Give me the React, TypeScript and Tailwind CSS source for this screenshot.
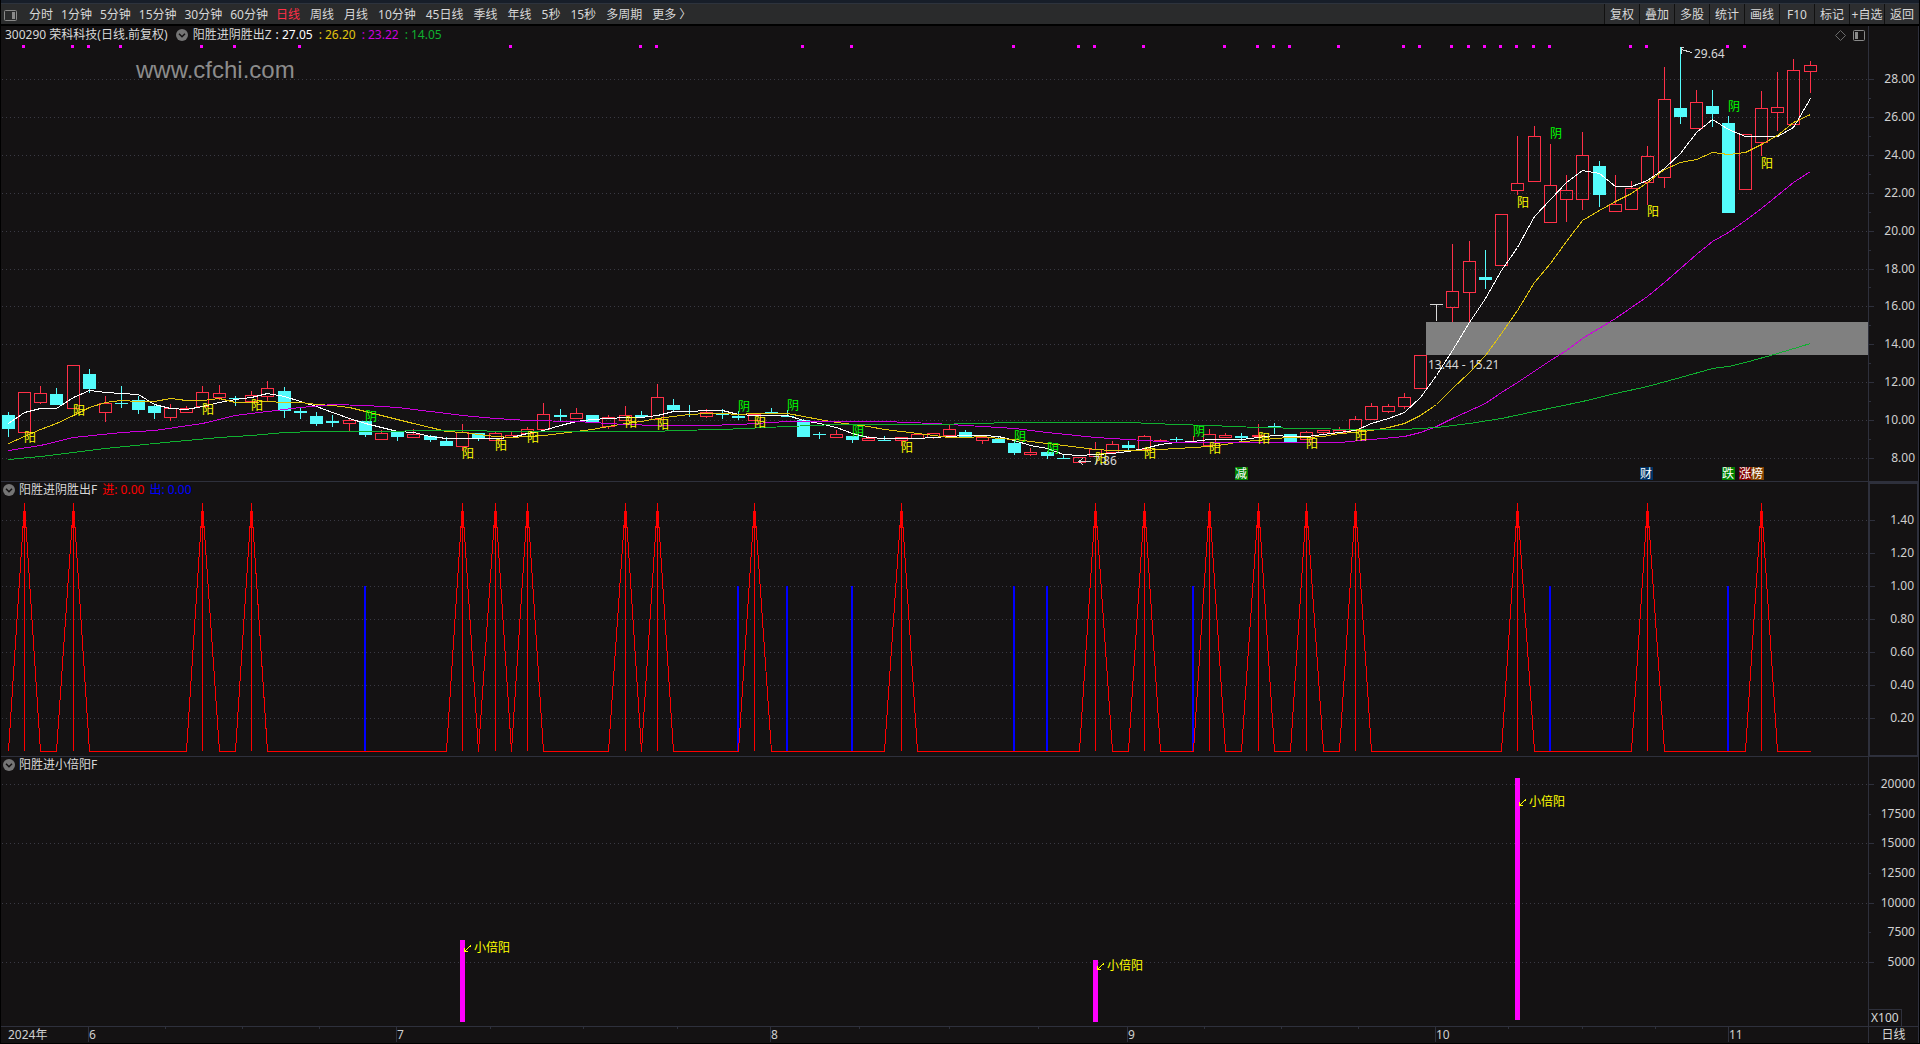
import React, { useLayoutEffect, useRef, useState } from 'react';
import { clsx } from 'clsx';

type Kind = 'u' | 'd' | 'f';
type Candle = [Kind, number, number, number, number];
type Point = [number, number];

const MINUTES = ['分时', '1分钟', '5分钟', '15分钟', '30分钟', '60分钟'];
const PERIODS = ['日线', '周线', '月线', '10分钟', '45日线', '季线', '年线', '5秒', '15秒', '多周期', '更多 〉'];
const ACTIONS = ['复权', '叠加', '多股', '统计', '画线', 'F10', '标记', '+自选', '返回'];

// plot widths and heights that the levels below are given in
const PLOT_W = 1867;
const PRICE_H = 437;
const SIGNAL_H = 256;
const VOLUME_H = 251;

// kind, high, body top, body bottom, low
const CANDLES: Candle[] = [
  ['d', 368, 371, 385, 392], ['u', 348, 348, 388, 388], ['u', 342, 349, 358, 359], ['d', 344, 350, 361, 361],
  ['u', 321, 321, 364, 364], ['d', 325, 330, 345, 348], ['u', 352, 359, 368, 377], ['d', 342, 359, 360, 363],
  ['d', 352, 356, 366, 369], ['d', 360, 362, 369, 374], ['u', 360, 364, 373, 376], ['u', 362, 364, 368, 368],
  ['u', 342, 348, 362, 362], ['u', 341, 349, 353, 355], ['d', 352, 354, 355, 361], ['u', 347, 351, 357, 357],
  ['u', 337, 344, 352, 357], ['d', 343, 347, 367, 373], ['d', 363, 367, 369, 374], ['d', 368, 372, 380, 381],
  ['d', 371, 377, 379, 382], ['u', 375, 376, 379, 387], ['d', 377, 377, 391, 392], ['u', 386, 389, 395, 395],
  ['d', 387, 387, 393, 396], ['u', 385, 390, 393, 393], ['d', 391, 392, 396, 397], ['d', 393, 397, 402, 402],
  ['u', 380, 388, 402, 406], ['d', 389, 389, 394, 396], ['u', 388, 389, 396, 396], ['u', 388, 391, 393, 393],
  ['u', 383, 385, 389, 389], ['u', 359, 370, 385, 385], ['d', 365, 371, 373, 376], ['u', 364, 369, 374, 374],
  ['d', 371, 371, 378, 378], ['u', 371, 373, 382, 384], ['u', 362, 371, 376, 376], ['d', 367, 371, 373, 373],
  ['u', 340, 353, 375, 375], ['d', 355, 361, 366, 367], ['d', 361, 367, 368, 372], ['u', 365, 368, 372, 373],
  ['d', 365, 370, 371, 374], ['d', 367, 372, 374, 375], ['u', 369, 370, 376, 376], ['d', 364, 368, 369, 369],
  ['d', 366, 372, 373, 373], ['d', 375, 376, 393, 393], ['d', 388, 390, 391, 394], ['u', 386, 390, 393, 393],
  ['d', 392, 392, 396, 398], ['u', 392, 394, 396, 396], ['d', 392, 396, 397, 397], ['u', 393, 393, 396, 401],
  ['u', 390, 390, 394, 394], ['u', 389, 389, 393, 394], ['u', 381, 385, 391, 391], ['d', 386, 388, 394, 394],
  ['u', 391, 393, 396, 399], ['d', 393, 395, 399, 399], ['d', 397, 399, 409, 410], ['u', 404, 408, 410, 411],
  ['d', 407, 408, 412, 414], ['d', 410, 414, 415, 415], ['u', 413, 413, 418, 418], ['u', 398, 405, 412, 412],
  ['u', 397, 400, 408, 408], ['d', 397, 401, 404, 405], ['u', 391, 392, 405, 405], ['u', 395, 396, 397, 397],
  ['d', 393, 395, 396, 397], ['u', 392, 397, 397, 397], ['u', 385, 390, 401, 401], ['u', 389, 391, 393, 393],
  ['d', 389, 392, 394, 396], ['u', 380, 391, 392, 392], ['d', 379, 382, 383, 389], ['d', 390, 390, 398, 398],
  ['u', 387, 388, 395, 395], ['u', 386, 386, 388, 390], ['u', 383, 386, 388, 388], ['u', 372, 375, 386, 386],
  ['u', 359, 362, 375, 375], ['u', 360, 362, 367, 368], ['u', 349, 353, 362, 364], ['u', 311, 311, 344, 344],
  ['f', 260, 260, 260, 276], ['u', 200, 247, 263, 277], ['u', 197, 217, 248, 277], ['d', 206, 233, 236, 244],
  ['u', 170, 170, 221, 221], ['u', 92, 139, 146, 150], ['u', 82, 92, 137, 137], ['u', 100, 141, 178, 178],
  ['u', 131, 146, 155, 177], ['u', 88, 111, 155, 165], ['d', 117, 122, 151, 162], ['u', 131, 160, 167, 167],
  ['u', 137, 144, 165, 165], ['u', 102, 112, 138, 160], ['u', 23, 55, 133, 143], ['d', 3, 64, 73, 79],
  ['u', 46, 58, 84, 84], ['d', 46, 62, 70, 82], ['d', 72, 79, 169, 169], ['u', 90, 90, 145, 145],
  ['u', 47, 64, 98, 111], ['u', 28, 63, 68, 86], ['u', 15, 26, 80, 80], ['u', 17, 21, 27, 48],
];

const MA_FAST = [
  379, 368, 364, 364, 353, 346, 348, 349, 350, 360, 364, 365, 362, 358, 355, 353, 349, 352, 357, 362, 368, 374, 379, 383,
  387, 388, 392, 394, 394, 394, 394, 393, 389, 386, 381, 377, 375, 374, 373, 373, 371, 367, 367, 366, 366, 370, 371, 371,
  371, 376, 379, 383, 389, 393, 394, 394, 394, 393, 392, 391, 391, 392, 396, 401, 404, 410, 411, 410, 409, 407, 404, 400,
  398, 397, 395, 395, 395, 393, 391, 392, 392, 390, 388, 386, 379, 374, 368, 353, 331, 306, 278, 254, 226, 203, 172, 155,
  138, 126, 129, 142, 142, 136, 124, 109, 88, 75, 85, 92, 92, 92, 83, 54,
];

const MA_SLOW = [
  399, 392, 385, 379, 371, 363, 358, 356, 357, 357, 354, 356, 356, 354, 358, 358, 357, 358, 358, 360, 361, 363, 367, 371,
  375, 379, 383, 387, 388, 390, 392, 393, 392, 391, 389, 387, 385, 382, 379, 377, 374, 372, 370, 369, 369, 370, 369, 369,
  369, 372, 375, 378, 380, 382, 385, 387, 389, 391, 393, 393, 392, 394, 395, 397, 399, 401, 403, 405, 406, 406, 406, 405,
  404, 403, 402, 400, 397, 396, 394, 393, 393, 392, 389, 388, 386, 383, 379, 371, 360, 344, 328, 311, 289, 266, 238, 219,
  197, 176, 166, 157, 149, 138, 125, 118, 115, 108, 110, 108, 100, 91, 78, 70,
];

const MA_MID: Point[] = [
  [0, 406], [2, 401], [4, 393], [7, 388], [9, 386], [12, 379], [14, 371], [16, 367], [18, 363], [20, 360], [22, 361],
  [24, 363], [26, 367], [28, 371], [30, 374], [32, 376], [35, 377], [38, 380], [40, 381], [43, 381], [45, 380],
  [47, 378], [48, 377], [54, 377], [57, 379], [60, 382], [62, 384], [64, 388], [67, 393], [70, 396], [72, 398],
  [82, 398], [84, 395], [86, 392], [87, 388], [88, 382], [89, 374], [91, 359], [92, 348], [93, 338], [95, 316],
  [96, 306], [97, 294], [99, 274], [100, 263], [101, 252], [102, 238], [103, 224], [104, 210], [105, 197], [106, 188],
  [107, 176], [108, 164], [109, 151], [110, 138], [111, 127],
];

const MA_LONG: Point[] = [
  [0, 415], [2, 412], [4, 408], [6, 404], [9, 399], [11, 396], [13, 393], [15, 391], [17, 388], [19, 387], [24, 387],
  [25, 386], [29, 386], [30, 387], [40, 387], [41, 386], [44, 385], [48, 382], [51, 380], [57, 380], [62, 378],
  [69, 378], [72, 380], [74, 381], [77, 383], [80, 384], [83, 385], [86, 385], [88, 383], [90, 379], [92, 374],
  [94, 367], [97, 357], [99, 349], [101, 342], [103, 333], [105, 324], [106, 322], [107, 318], [109, 309], [111, 299],
];

// bar index and centre of the label
const YANG: Point[] = [
  [1, 393], [4, 366], [12, 365], [15, 361], [28, 409], [30, 401], [32, 393], [38, 378], [40, 380], [46, 378], [55, 403],
  [67, 414], [70, 409], [74, 404], [77, 394], [80, 399], [83, 391], [93, 158], [101, 167], [108, 119],
];
const YIN: Point[] = [
  [22, 372], [45, 362], [48, 361], [52, 387], [62, 392], [64, 404], [73, 387], [95, 89], [106, 62],
];

const DOTS = [
  1, 4, 5, 7, 12, 14, 18, 31, 39, 40, 49, 52, 62, 66, 67, 70, 75, 77, 78, 79, 82, 86, 87, 89, 90, 91, 92, 93, 94, 95,
  100, 101, 106, 107,
];

const BADGES = [
  { text: '减', at: 76, dx: -6, fill: '#008000' },
  { text: '财', at: 101, dx: -7, fill: '#003366' },
  { text: '跌', at: 106, dx: -6, fill: '#008000' },
  { text: '涨', at: 107, dx: -6, fill: '#800000' },
  { text: '榜', at: 107, dx: 6, fill: '#804000' },
];

const ENTRIES = YANG.map(([i]) => i);
const EXITS = YIN.map(([i]) => i);

const VOLUMES = [
  { at: 28, top: 165, bottom: 247, label: 173 },
  { at: 67, top: 185, bottom: 247, label: 191 },
  { at: 93, top: 3, bottom: 245, label: 27 },
];

const MONTHS = [
  { label: '6', x: 87 },
  { label: '7', x: 395 },
  { label: '8', x: 769 },
  { label: '9', x: 1126 },
  { label: '10', x: 1434 },
  { label: '11', x: 1727 },
];

const PRICES = [28, 26, 24, 22, 20, 18, 16, 14, 12, 10, 8];
const SIGNALS = [1.4, 1.2, 1, 0.8, 0.6, 0.4, 0.2];
const LOTS = [20000, 17500, 15000, 12500, 10000, 7500, 5000];

const priceLevel = (p: number) => 35 + (28 - p) * 18.95;
const signalLevel = (v: number) => 251 - v * 165.3;
const lotLevel = (v: number) => 246.4 - v * 0.01187;

const barX = (i: number, w: number) => Math.floor(((7.14 + i * 16.234) * w) / PLOT_W);

// svg that measures itself, so the drawing follows the window and the text keeps its size
const Plot = ({ children, className }: { children: (w: number, h: number) => React.ReactNode; className?: string }) => {
  const ref = useRef<HTMLDivElement>(null);
  const [size, setSize] = useState({ w: 0, h: 0 });

  useLayoutEffect(() => {
    const el = ref.current;
    if (!el) return;
    const measure = () => setSize({ w: el.clientWidth, h: el.clientHeight });
    measure();
    const observer = new ResizeObserver(measure);
    observer.observe(el);
    return () => observer.disconnect();
  }, []);

  return (
    <div ref={ref} className={clsx('min-h-0 overflow-hidden', className)}>
      <svg className="block h-full w-full text-xs" shapeRendering="crispEdges">
        {size.w > 0 && children(size.w, size.h)}
      </svg>
    </div>
  );
};

const GridLines = ({ levels, w }: { levels: number[]; w: number }) => (
  <>
    {levels.map((y) => (
      <line key={y} x1={1} x2={w} y1={y + 0.5} y2={y + 0.5} stroke="#3a3a44" strokeDasharray="1 3" />
    ))}
  </>
);

const PricePlot = ({ w, h }: { w: number; h: number }) => {
  const y = (v: number) => Math.round((v * h) / PRICE_H);
  const x = (i: number) => barX(i, w);
  const path = (pts: Point[]) => pts.map(([i, v]) => `${x(i) + 0.5},${y(v) + 0.5}`).join(' ');
  const series = (vals: number[]) => path(vals.map((v, i) => [i, v] as Point));

  return (
    <g>
      <GridLines w={w} levels={PRICES.map((p) => y(priceLevel(p)))} />
      {DOTS.map((i) => (
        <rect key={i} x={x(i) - 2} y={y(1)} width={3} height={3} fill="#ff00ff" />
      ))}
      <rect x={x(87) + 6} y={y(278)} width={w - x(87) - 6} height={y(311) - y(278)} fill="#808080" />
      {CANDLES.map(([kind, high, top, bottom, low], i) => {
        const cx = x(i);
        const color = kind === 'u' ? '#ff3048' : kind === 'd' ? '#54fcfc' : '#d8d8d8';
        return (
          <g key={i} fill={color}>
            {top > high && <rect x={cx} y={y(high)} width={1} height={y(top) - y(high)} />}
            {low > bottom && <rect x={cx} y={y(bottom)} width={1} height={y(low) - y(bottom) + 1} />}
            {kind === 'u' ? (
              <rect x={cx - 5.5} y={y(top) + 0.5} width={12} height={y(bottom) - y(top)} fill="none" stroke={color} />
            ) : (
              <rect x={cx - 6} y={y(top)} width={13} height={Math.max(y(bottom) - y(top), 1)} />
            )}
          </g>
        );
      })}
      <g fill="none">
        <polyline points={series(MA_FAST)} stroke="#ffffff" />
        <polyline points={series(MA_SLOW)} stroke="#e0c410" />
        <polyline points={path(MA_MID)} stroke="#cc00dc" />
        <polyline points={path(MA_LONG)} stroke="#10b030" />
      </g>
      {YANG.map(([i, v]) => (
        <text key={i} x={x(i)} y={y(v) + 5} fill="#ffff00">阳</text>
      ))}
      {YIN.map(([i, v]) => (
        <text key={i} x={x(i)} y={y(v) + 5} fill="#00ff00">阴</text>
      ))}
      {BADGES.map((b) => (
        <g key={b.text}>
          <rect x={x(b.at) + b.dx} y={y(423)} width={13} height={13} rx={1} fill={b.fill} />
          <text x={x(b.at) + b.dx} y={y(423) + 11} fill="#ffffff">{b.text}</text>
        </g>
      ))}
      <g fill="#d8d8d8">
        <text x={x(87) + 8} y={y(321) + 4}>13.44 - 15.21</text>
        <text x={x(103) + 14} y={y(10) + 4}>29.64</text>
        <text x={x(66) + 14} y={y(417) + 4}>7.86</text>
      </g>
      <g fill="none" stroke="#d8d8d8">
        <path d={`M${x(103) + 12} ${y(8) + 0.5} l-11 -3 M${x(103) + 4} ${y(4) - 0.5} h-3 v6`} />
        <path d={`M${x(66) + 12} ${y(417) + 0.5} h-12 m4 -3 l-4 3 l4 3`} />
      </g>
    </g>
  );
};

const SignalPlot = ({ w, h }: { w: number; h: number }) => {
  const y = (v: number) => Math.round((signalLevel(v) * h) / SIGNAL_H);
  const points = CANDLES.map((_, i) => `${barX(i, w) + 0.5},${y(ENTRIES.includes(i) ? 1.5 : 0) + 0.5}`).join(' ');

  return (
    <g>
      <GridLines w={w} levels={SIGNALS.map(y)} />
      {EXITS.map((i) => (
        <rect key={i} x={barX(i, w) - 1} y={y(1)} width={2} height={y(0) - y(1) + 1} fill="#0000ff" />
      ))}
      <polyline points={points} fill="none" stroke="#ff0000" strokeLinejoin="bevel" />
      {ENTRIES.map((i) => (
        <g key={i} fill="#ff0000">
          <rect x={barX(i, w)} y={y(1.5)} width={1} height={y(0) - y(1.5)} />
          <rect x={barX(i, w) - 1} y={y(1.45)} width={3} height={y(1.35) - y(1.45)} />
        </g>
      ))}
    </g>
  );
};

const VolumePlot = ({ w, h }: { w: number; h: number }) => {
  const y = (v: number) => Math.round((v * h) / VOLUME_H);

  return (
    <g>
      <GridLines w={w} levels={[20000, 15000, 10000, 5000].map((v) => y(lotLevel(v)))} />
      {VOLUMES.map(({ at, top, bottom, label }) => {
        const cx = barX(at, w);
        return (
          <g key={at}>
            <rect x={cx - 2} y={y(top)} width={5} height={y(bottom) - y(top)} fill="#ff00ff" />
            <path d={`M${cx + 9} ${y(label) - 2.5} l-7 6 m0 -4 v4 h4`} fill="none" stroke="#ffff00" />
            <text x={cx + 12} y={y(label) + 4} fill="#ffff00">小倍阳</text>
          </g>
        );
      })}
    </g>
  );
};

interface Tick {
  level: number;
  label?: string;
  minor?: boolean;
}

const Axis = ({ ticks, height, framed, children }: { ticks: Tick[]; height: number; framed?: boolean; children?: React.ReactNode }) => (
  <div
    className={clsx(
      'relative flex w-[51px] shrink-0 flex-col border-[#2e303c]',
      framed ? 'border-2 pt-4' : 'border-x border-b pt-[18px]'
    )}
  >
    <Plot className="flex-1">
      {(w, h) =>
        ticks.map(({ level, label, minor }) => {
          const y = Math.round((level * h) / height);
          return (
            <g key={level}>
              <rect x={0} y={y} width={minor ? 2 : 5} height={1} fill="#2e303c" />
              {label && (
                <text x={w - 3} y={y + 4} textAnchor="end" fill="#d0d0d0">{label}</text>
              )}
            </g>
          );
        })
      }
    </Plot>
    {children}
  </div>
);

const Pane = ({ header, axis, className, children }: {
  header: React.ReactNode;
  axis: React.ReactNode;
  className: string;
  children: (w: number, h: number) => React.ReactNode;
}) => (
  <section className={clsx('flex min-h-0', className)}>
    <div className="flex min-w-0 flex-1 flex-col border-b border-[#2e303c]">
      <header className="flex h-[18px] shrink-0 items-center whitespace-nowrap">{header}</header>
      <Plot className="flex-1">{children}</Plot>
    </div>
    {axis}
  </section>
);

const Collapse = ({ label }: { label: string }) => (
  <button aria-label={label} className="shrink-0">
    <svg className="block size-3" viewBox="0 0 12 12">
      <circle cx="6" cy="6" r="6" fill="#757575" />
      <path d="M3 4.8 L6 7.8 L9 4.8" fill="none" stroke="#141213" strokeWidth="1.5" />
    </svg>
  </button>
);

const Toolbar = () => (
  <nav className="flex h-[22px] shrink-0 items-stretch border-b-2 border-black bg-[#2a2b2c] whitespace-nowrap [&_button]:pt-0.5">
    <button aria-label="侧栏" className="flex w-7 items-center pl-[3px]">
      <svg className="block h-[11px] w-[13px]" viewBox="0 0 13 11">
        <rect x="0.5" y="0.5" width="12" height="10" rx="1" fill="none" stroke="#8a8a8a" />
        <rect x="8" y="2" width="3" height="7" fill="#8a8a8a" />
      </svg>
    </button>
    <div className="flex gap-2">
      {MINUTES.map((p) => (
        <button key={p}>{p}</button>
      ))}
    </div>
    <div className="ml-2 flex gap-2.5">
      {PERIODS.map((p) => (
        <button key={p} className={clsx(p === '日线' && 'text-[#ff3048]')}>{p}</button>
      ))}
    </div>
    <div className="ml-auto flex">
      {ACTIONS.map((a) => (
        <button key={a} className="w-[35px] overflow-hidden border-l border-[#111] bg-[#2d2e30] text-center">{a}</button>
      ))}
    </div>
  </nav>
);

const TimeAxis = () => (
  <footer className="flex h-4 shrink-0">
    <Plot className="flex-1">
      {(w) => {
        const x = (v: number) => Math.round((v * w) / PLOT_W);
        return (
          <g>
            <text x={7} y={12} fill="#d0d0d0">2024年</text>
            {MONTHS.map((m, n) => {
              const next = MONTHS[n + 1];
              return (
                <g key={m.label}>
                  <rect x={x(m.x)} y={0} width={1} height={15} fill="#2e303c" />
                  <text x={x(m.x) + 1} y={12} fill="#d0d0d0">{m.label}</text>
                  {next && [1, 2, 3].map((q) => (
                    <rect key={q} x={x(m.x + ((next.x - m.x) * q) / 4)} y={0} width={1} height={2} fill="#2e303c" />
                  ))}
                </g>
              );
            })}
          </g>
        );
      }}
    </Plot>
    <div className="w-[51px] shrink-0 border-x border-[#2e303c] text-center leading-4">日线</div>
  </footer>
);

export default function App() {
  return (
    <div className="relative flex h-screen min-h-[600px] flex-col bg-black px-px pb-px font-['Noto_Sans','Noto_Sans_CJK_SC',sans-serif] text-xs text-[#d8d8d8]">
      <div className="h-1 shrink-0 border-b border-[#2d333d] bg-[#171e29]" />
      <Toolbar />
      <main className="flex min-h-0 flex-1 flex-col bg-[#141213]">
        <Pane
          className="flex-[456]"
          header={
            <>
              <span className="mr-2 ml-1">300290 荣科科技(日线.前复权)</span>
              <Collapse label="收起主图" />
              <span className="ml-[5px]">阳胜进阴胜出Z</span>
              <div className="ml-1 flex gap-1.5">
                <span className="text-white">: 27.05</span>
                <span className="text-[#e0c410]">: 26.20</span>
                <span className="text-[#cc00dc]">: 23.22</span>
                <span className="text-[#10b030]">: 14.05</span>
              </div>
              <div className="mr-[3px] ml-auto flex items-center gap-[7px]">
                <button aria-label="标记点">
                  <svg className="block size-[11px]" viewBox="0 0 11 11">
                    <path d="M5.5 0.5 L10.5 5.5 L5.5 10.5 L0.5 5.5 Z" fill="none" stroke="#6a6a6a" />
                  </svg>
                </button>
                <button aria-label="布局">
                  <svg className="block h-[11px] w-3" viewBox="0 0 12 11">
                    <rect x="0.5" y="0.5" width="11" height="10" rx="1" fill="none" stroke="#8a8a8a" />
                    <rect x="2" y="2" width="3" height="7" fill="#8a8a8a" />
                  </svg>
                </button>
              </div>
            </>
          }
          axis={
            <Axis
              height={PRICE_H}
              ticks={[
                ...PRICES.map((p) => ({ level: priceLevel(p), label: p.toFixed(2) })),
                ...PRICES.slice(1).map((p) => ({ level: priceLevel(p + 1), minor: true })),
              ]}
            />
          }
        >
          {(w, h) => <PricePlot w={w} h={h} />}
        </Pane>
        <Pane
          className="flex-[275]"
          header={
            <div className="flex items-center pb-0.5 pl-[2px]">
              <Collapse label="收起副图一" />
              <span className="ml-1">阳胜进阴胜出F</span>
              <span className="ml-[5px] text-[#ff0000]">进: 0.00</span>
              <span className="ml-[5px] text-[#0000ff]">出: 0.00</span>
            </div>
          }
          axis={
            <Axis
              framed
              height={SIGNAL_H - 1}
              ticks={SIGNALS.map((v) => ({ level: signalLevel(v), label: v.toFixed(2) }))}
            />
          }
        >
          {(w, h) => <SignalPlot w={w} h={h} />}
        </Pane>
        <Pane
          className="flex-[270]"
          header={
            <div className="flex items-center pb-0.5 pl-[2px]">
              <Collapse label="收起副图二" />
              <span className="ml-1">阳胜进小倍阳F</span>
            </div>
          }
          axis={
            <Axis
              height={VOLUME_H}
              ticks={LOTS.map((v) => ({ level: lotLevel(v), label: String(v), minor: v % 5000 !== 0 }))}
            >
              <span className="absolute bottom-0 left-0 border-t border-r border-[#2e303c] px-[2px] leading-4">
                X100
              </span>
            </Axis>
          }
        >
          {(w, h) => <VolumePlot w={w} h={h} />}
        </Pane>
        <TimeAxis />
      </main>
      <div className="pointer-events-none absolute top-[54px] left-[136px] font-['Liberation_Sans',Arial,sans-serif] text-2xl leading-8 text-[#8c8c8c]">
        www.cfchi.com
      </div>
    </div>
  );
}
